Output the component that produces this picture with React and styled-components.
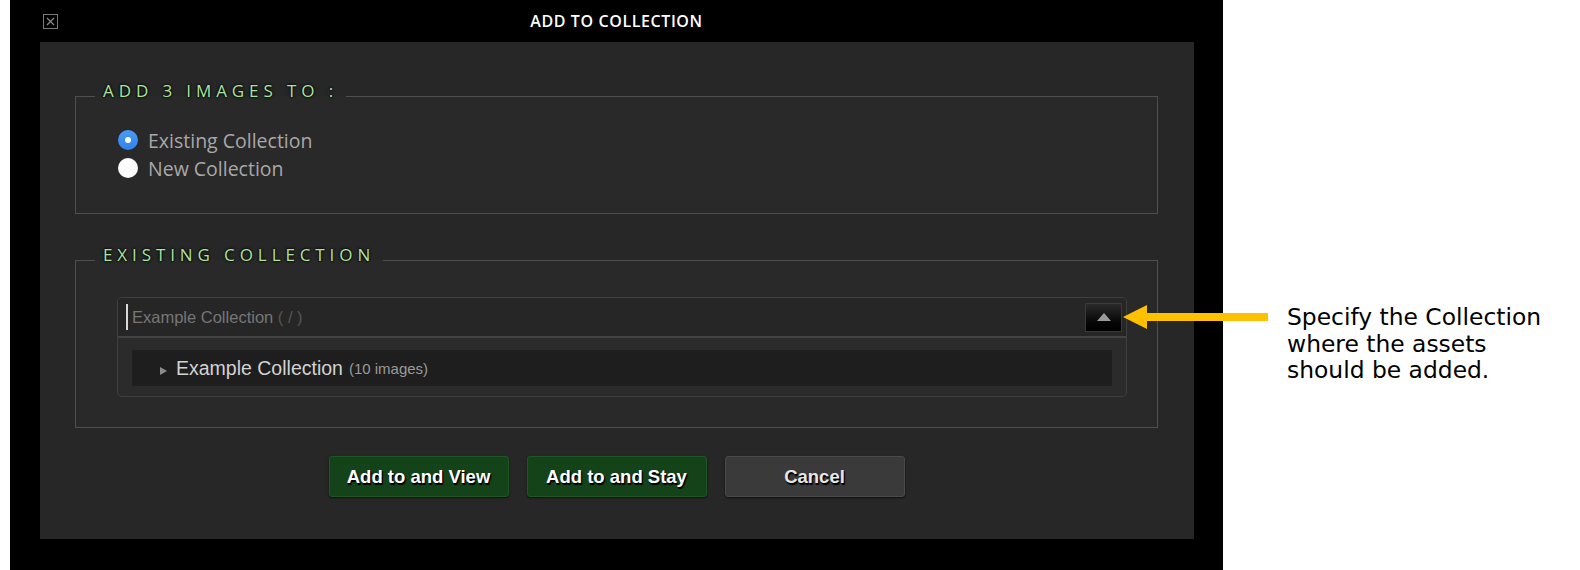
import React from "react";
import styled, { createGlobalStyle } from "styled-components";

const GlobalStyle = createGlobalStyle`
  html, body { margin: 0; padding: 0; background: #ffffff; }
  body { width: 1580px; height: 570px; overflow: hidden; }
  * { box-sizing: border-box; }
`;

const Page = styled.div`
  position: relative;
  display: flex;
  align-items: flex-start;
  width: 1580px;
  height: 570px;
  padding-left: 10px;
`;

const Dialog = styled.div`
  width: 1213px;
  height: 570px;
  background: #000;
  display: flex;
  flex-direction: column;
  flex-shrink: 0;
`;

const TitleBar = styled.div`
  height: 42px;
  display: grid;
  grid-template-columns: 1fr auto 1fr;
  align-items: center;
`;

const CloseBox = styled.div`
  justify-self: start;
  margin-left: 33px;
  width: 15px;
  height: 15px;
  border: 1px solid #7a7a7a;
  display: flex;
  align-items: center;
  justify-content: center;
`;

const Title = styled.div`
  font-family: "Open Sans", "Noto Sans", sans-serif;
  font-size: 16px;
  font-weight: 600;
  letter-spacing: 0.6px;
  color: #ffffff;
  line-height: 20px;
`;

const Panel = styled.div`
  margin: 0 29px 0 30px;
  height: 497px;
  background: #272727;
  padding: 39px 36px 0 35px;
  display: flex;
  flex-direction: column;
`;

const Group = styled.fieldset`
  margin: ${(p) => p.$top || 0}px 0 0 0;
  padding: 0;
  border: 1px solid #4e4e4e;
  background: #292929;
  min-width: 0;
`;

const Legend = styled.legend`
  margin-left: 19px;
  padding: 0 8px 10px 8px;
  font-family: "Open Sans", "Noto Sans", sans-serif;
  font-size: 17px;
  font-weight: 500;
  line-height: 20px;
  letter-spacing: 4.9px;
  color: #abe59f;
  text-shadow: 0 0 3px #000, 0 0 2px #000;
`;

const RadioList = styled.div`
  padding: 15px 0 31px 42px;
  display: flex;
  flex-direction: column;
`;

const RadioRow = styled.label`
  display: flex;
  align-items: center;
  height: 28px;
  gap: 10px;
  font-family: "Open Sans", "Noto Sans", sans-serif;
  font-size: 19.5px;
  color: #a8a8a8;
`;

const RadioDot = styled.span`
  width: 20px;
  height: 20px;
  border-radius: 50%;
  flex-shrink: 0;
  background: ${(p) => (p.$on ? "linear-gradient(#4a9bf7, #2f83ec)" : "#ffffff")};
  display: flex;
  align-items: center;
  justify-content: center;
  &::after {
    content: "";
    display: ${(p) => (p.$on ? "block" : "none")};
    width: 6px;
    height: 6px;
    border-radius: 50%;
    background: #fff;
  }
`;

const ComboWrap = styled.div`
  padding: 22px 30px 30px 41px;
`;

const Combo = styled.div`
  border: 1px solid #3f3f3f;
  border-radius: 5px;
  overflow: hidden;
  background: #2b2b2b;
`;

const ComboInput = styled.div`
  height: 40px;
  display: flex;
  align-items: center;
  padding: 0 4px 0 8px;
  background: #262626;
  border-bottom: 2px solid #434343;
`;

const Caret = styled.span`
  width: 2px;
  height: 26px;
  background: #d8d8d8;
  flex-shrink: 0;
`;

const InputText = styled.span`
  margin-left: 4px;
  font-family: "Liberation Sans", Arial, sans-serif;
  font-size: 16.5px;
  color: #767676;
`;

const Muted = styled.span`
  color: ${(p) => p.$color || "#555"};
  font-size: ${(p) => p.$size || "inherit"};
  margin-left: ${(p) => p.$gap || 0}px;
`;

const ToggleBtn = styled.div`
  margin-left: auto;
  width: 37px;
  height: 29px;
  background: linear-gradient(#2a2a2a, #050505 70%, #000);
  border: 1px solid #3a3a3a;
  display: flex;
  align-items: center;
  justify-content: center;
`;

const UpTri = styled.span`
  width: 0;
  height: 0;
  border-left: 7px solid transparent;
  border-right: 7px solid transparent;
  border-bottom: 8px solid #9a9a9a;
`;

const ComboList = styled.div`
  padding: 12px 14px 10px 14px;
`;

const TreeRow = styled.div`
  height: 36px;
  background: #1e1e1e;
  display: flex;
  align-items: center;
  padding-left: 28px;
  font-family: "Liberation Sans", Arial, sans-serif;
  font-size: 19.5px;
  color: #d2d2d2;
`;

const RightTri = styled.span`
  width: 0;
  height: 0;
  margin-top: 5px;
  margin-right: 9px;
  border-top: 4.5px solid transparent;
  border-bottom: 4.5px solid transparent;
  border-left: 7px solid #8c8c8c;
`;

const ButtonRow = styled.div`
  margin-top: 28px;
  display: flex;
  justify-content: center;
  gap: 18px;
`;

const Button = styled.button`
  width: 180px;
  height: 41px;
  border-radius: 3px;
  border: 1px solid ${(p) => (p.$green ? "#1f5624" : "#4a4a4a")};
  background: ${(p) => (p.$green ? "#154319" : "#3a3a3a")};
  box-shadow: 0 1px 2px rgba(0, 0, 0, 0.6);
  font-family: "Liberation Sans", Arial, sans-serif;
  font-weight: bold;
  font-size: 18.5px;
  color: ${(p) => (p.$green ? "#ffffff" : "#e6e6e6")};
  text-shadow: 1px 1px 1px #000, 1px 2px 1px #000;
  padding: 0;
  cursor: pointer;
`;

const Note = styled.div`
  margin: 304px 0 0 64px;
  font-family: "DejaVu Sans", Verdana, sans-serif;
  font-size: 23.4px;
  line-height: 26.7px;
  color: #000;
`;

const ArrowSvg = styled.svg`
  position: absolute;
  left: 1122px;
  top: 304px;
`;

export default function App() {
  return (
    <>
      <GlobalStyle />
      <Page>
        <Dialog>
          <TitleBar>
            <CloseBox>
              <svg width="9" height="9" viewBox="0 0 9 9">
                <path d="M1 1 L8 8 M8 1 L1 8" stroke="#8a8a8a" strokeWidth="1.2" />
              </svg>
            </CloseBox>
            <Title>ADD TO COLLECTION</Title>
            <span />
          </TitleBar>
          <Panel>
            <Group>
              <Legend>ADD 3 IMAGES TO :</Legend>
              <RadioList>
                <RadioRow>
                  <RadioDot $on />
                  Existing Collection
                </RadioRow>
                <RadioRow>
                  <RadioDot />
                  New Collection
                </RadioRow>
              </RadioList>
            </Group>
            <Group $top={31}>
              <Legend>EXISTING COLLECTION</Legend>
              <ComboWrap>
                <Combo>
                  <ComboInput>
                    <Caret />
                    <InputText>
                      Example Collection <Muted $color="#555">( / )</Muted>
                    </InputText>
                    <ToggleBtn>
                      <UpTri />
                    </ToggleBtn>
                  </ComboInput>
                  <ComboList>
                    <TreeRow>
                      <RightTri />
                      Example Collection
                      <Muted $color="#9a9a9a" $size="15px" $gap={6}>
                        (10 images)
                      </Muted>
                    </TreeRow>
                  </ComboList>
                </Combo>
              </ComboWrap>
            </Group>
            <ButtonRow>
              <Button $green>Add to and View</Button>
              <Button $green>Add to and Stay</Button>
              <Button>Cancel</Button>
            </ButtonRow>
          </Panel>
        </Dialog>
        <Note>
          Specify the Collection
          <br />
          where the assets
          <br />
          should be added.
        </Note>
        <ArrowSvg width="148" height="26" viewBox="0 0 148 26">
          <polygon points="1,13 25,1 25,9 146,9 146,17 25,17 25,25" fill="#ffc000" />
        </ArrowSvg>
      </Page>
    </>
  );
}
